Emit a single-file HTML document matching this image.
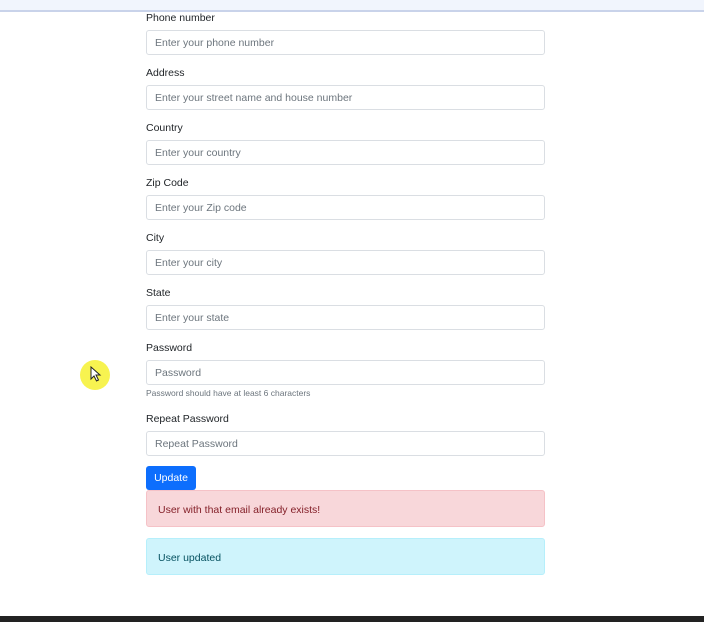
<!DOCTYPE html>
<html><head><style>
body{margin:0;width:704px;height:622px;background:#fff;position:relative;overflow:hidden;font-family:"Liberation Sans","DejaVu Sans",sans-serif;}
.top{position:absolute;left:0;top:0;width:704px;height:10px;background:#f1f5fd;border-bottom:2px solid #c9d3ea;}
.l{position:absolute;left:146px;font-size:10.5px;color:#212529;margin-top:1px;}
.i{position:absolute;left:146px;height:23px;border:1px solid #dadee3;border-radius:3px;font-size:10.5px;color:#6c757d;line-height:25px;padding-left:8px;box-sizing:content-box;width:389px;}
.h{position:absolute;left:146px;font-size:8.5px;color:#6c757d;}
.btn{position:absolute;left:146px;top:466px;width:50px;height:24px;background:#0d6efd;color:#fff;border-radius:3px;font-size:10.5px;line-height:25px;text-align:center;}
.a{position:absolute;left:146px;border-radius:3px;font-size:10.5px;padding-left:11px;box-sizing:border-box;width:399px;}
.foot{position:absolute;left:0;top:616px;width:704px;height:6px;background:#222;}
.dot{position:absolute;left:80px;top:360px;width:30px;height:30px;border-radius:50%;background:#f7f350;}
</style></head><body>
<div class="top"></div>
<div class="l" style="top:11px">Phone number</div><div class="i" style="top:30px">Enter your phone number</div>
<div class="l" style="top:66px">Address</div><div class="i" style="top:85px">Enter your street name and house number</div>
<div class="l" style="top:121px">Country</div><div class="i" style="top:140px">Enter your country</div>
<div class="l" style="top:176px">Zip Code</div><div class="i" style="top:195px">Enter your Zip code</div>
<div class="l" style="top:231px">City</div><div class="i" style="top:250px">Enter your city</div>
<div class="l" style="top:286px">State</div><div class="i" style="top:305px">Enter your state</div>
<div class="l" style="top:341px">Password</div><div class="i" style="top:360px">Password</div>
<div class="h" style="top:388px">Password should have at least 6 characters</div>
<div class="l" style="top:412px">Repeat Password</div><div class="i" style="top:431px">Repeat Password</div>
<div class="btn">Update</div>
<div class="a" style="top:490px;height:37px;line-height:38px;background:#f8d7da;border:1px solid #f5c2c7;color:#842029;">User with that email already exists!</div>
<div class="a" style="top:538px;height:37px;line-height:38px;background:#cff4fc;border:1px solid #b6effb;color:#055160;">User updated</div>
<div class="dot"></div>
<svg style="position:absolute;left:90px;top:366px" width="12" height="16" viewBox="0 0 12 16"><path d="M1 1 L1 13 L4 10 L6.5 15 L8.5 14 L6 9 L10 9 Z" fill="#fff" stroke="#222" stroke-width="1"/></svg>
<div class="foot"></div>
</body></html>
